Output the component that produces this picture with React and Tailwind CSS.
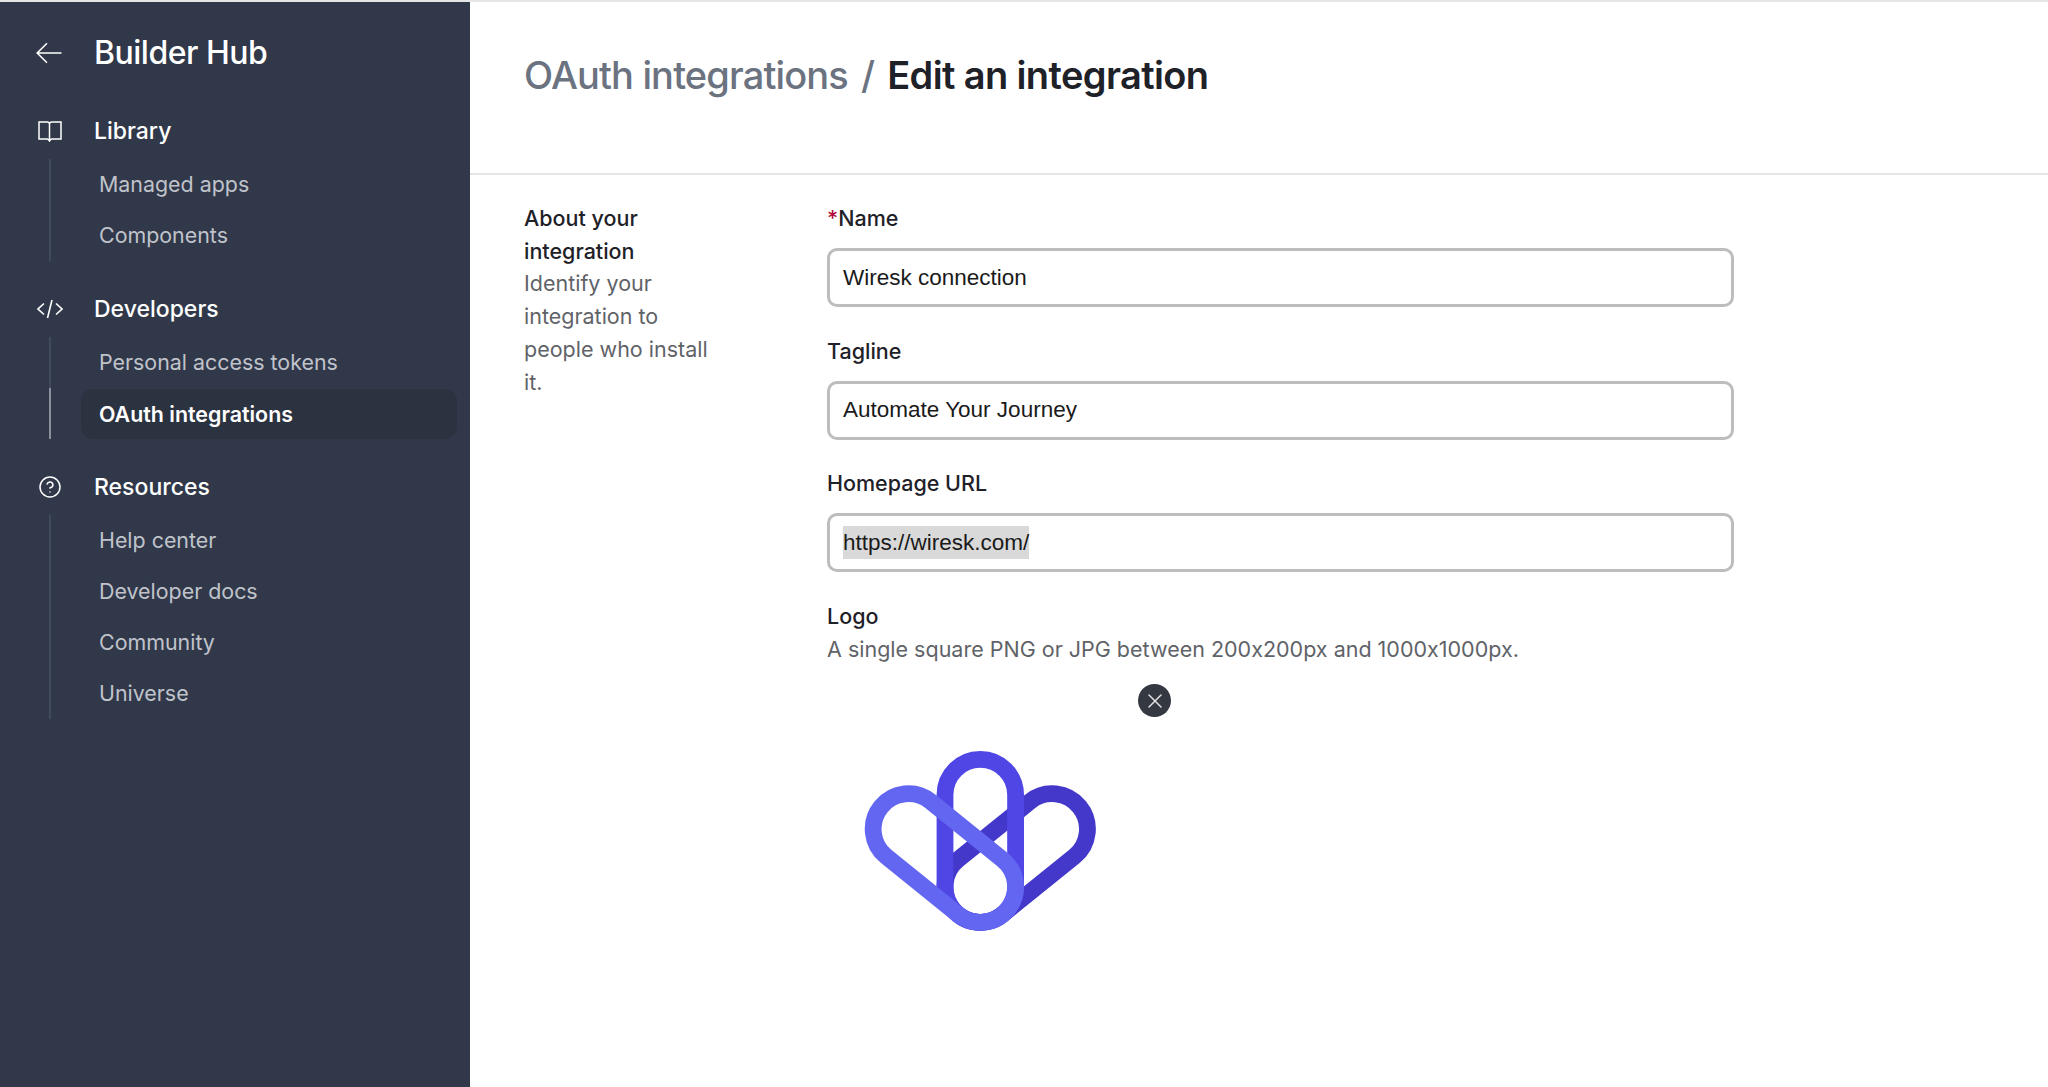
import React from 'react'
import { CircleHelp, X } from 'lucide-react'

function BackIcon() {
  return (
    <svg width="26" height="22" viewBox="0 0 26 22" fill="none" stroke="currentColor" strokeWidth="1.6">
      <path d="M25.5 11H1.2M11 1.2L1.2 11l9.8 9.8" />
    </svg>
  )
}

function BookIcon() {
  return (
    <svg width="24" height="21" viewBox="0 0 24 21" fill="none" stroke="currentColor" strokeWidth="1.5">
      <path d="M1 1H9Q11.5 1 11.5 3Q11.5 1 14 1H23V18H14Q12.5 18 11.5 20Q10.5 18 9 18H1ZM11.5 3V19.5" />
    </svg>
  )
}

function CodeIcon() {
  return (
    <svg width="26" height="20" viewBox="0 0 26 20" fill="none" stroke="currentColor" strokeWidth="1.6">
      <path d="M7 4.5L1 10l6 5.5M19 4.5l6 5.5-6 5.5M15 1l-4.5 18" />
    </svg>
  )
}

function HelpIcon() {
  return <CircleHelp size={24} strokeWidth={1.5} />
}

const groups = [
  { title: 'Library', icon: BookIcon, items: ['Managed apps', 'Components'] },
  {
    title: 'Developers',
    icon: CodeIcon,
    items: ['Personal access tokens', 'OAuth integrations'],
  },
  {
    title: 'Resources',
    icon: HelpIcon,
    items: ['Help center', 'Developer docs', 'Community', 'Universe'],
  },
]

function Sidebar() {
  return (
    <aside className="w-[470px] shrink-0 bg-[#30384a] pt-[26px] font-['Inter',sans-serif] text-white">
      <div className="flex h-[50px] items-center">
        <div className="flex w-[94px] justify-center pl-[10px] pr-[6px]">
          <BackIcon />
        </div>
        <span className="text-[32px] font-medium tracking-[-0.5px]">Builder Hub</span>
      </div>
      <div className="mt-[25px] flex flex-col gap-[20px]">
        {groups.map((group) => (
          <div key={group.title}>
            <div className="flex h-[56px] items-center">
              <div className="flex w-[100px] justify-center">
                <group.icon />
              </div>
              <span className="-ml-[6px] pt-[1px] text-[23px] font-medium">{group.title}</span>
            </div>
            <ul className="ml-[49px] mr-[13px]">
              {group.items.map((item) => {
                const active = item === 'OAuth integrations'
                return (
                  <li
                    key={item}
                    className={`flex h-[51px] items-center border-l-2 pl-[30px] ${active ? 'border-[#8b909c]' : 'border-[#414a5c]'}`}
                  >
                    <div
                      className={`flex h-[50px] w-full items-center rounded-[12px] pl-[18px] text-[21.4px] ${active ? 'bg-[#2b3240] pt-[1px] font-semibold text-white' : 'text-[#c0c3ca]'}`}
                    >
                      {item}
                    </div>
                  </li>
                )
              })}
            </ul>
          </div>
        ))}
      </div>
    </aside>
  )
}

function Field({ label, value, required, selected }) {
  return (
    <div>
      <label className="block text-[21.5px] font-medium leading-[33px] text-[#1f2128]">
        {required && <span className="text-[#b00a3c]">*</span>}
        {label}
      </label>
      <div className="mt-[13px] flex h-[59px] items-center rounded-[10px] border-[3px] border-[#bdbdbd] px-[13px] font-['Liberation_Sans',sans-serif] text-[22.5px] text-[#1a1a1a]">
        {selected ? <span className="bg-[#d9d9d9]">{value}</span> : value}
      </div>
    </div>
  )
}

function Logo() {
  const pill = {
    x: 145,
    y: 99.4,
    width: 70.6,
    height: 162.9,
    rx: 35.3,
    fill: 'none',
    strokeWidth: 16.8,
  }
  return (
    <svg viewBox="27 40 306 306" className="h-[306px] w-[306px]">
      <rect {...pill} stroke="#4338ca" transform="rotate(51.1 180.3 227)" />
      <rect {...pill} stroke="#4f46e5" />
      <rect {...pill} stroke="#6366f1" transform="rotate(-51.1 180.3 227)" />
    </svg>
  )
}

export default function App() {
  return (
    <div className="flex min-h-[1087px] border-t-2 border-[#e5e5e5] bg-white font-['Inter',sans-serif] [font-feature-settings:'calt'_0]">
      <Sidebar />
      <main className="flex-1">
        <header className="flex h-[173px] items-start border-b-2 border-[#e5e5e5] pl-[54px] pt-[49px]">
          <h1 className="text-[38px] font-medium leading-[48px] tracking-[-0.85px] text-[#6b7280]">
            OAuth integrations<span className="mx-[13px]">/</span>
            <span className="font-semibold tracking-[-0.62px] text-[#1f2128]">Edit an integration</span>
          </h1>
        </header>
        <div className="flex pl-[54px] pt-[27px]">
          <div className="w-[303px] pr-[110px] text-[21.5px] leading-[32.7px] text-[#5f6368]">
            <div className="font-medium text-[#1f2128]">About your integration</div>
            Identify your integration to people who install it.
          </div>
          <div className="w-[907px]">
            <div className="flex flex-col gap-[27.5px]">
              <Field label="Name" value="Wiresk connection" required />
              <Field label="Tagline" value="Automate Your Journey" />
              <Field label="Homepage URL" value="https://wiresk.com/" selected />
            </div>
            <div className="mt-[28px] text-[21.5px] leading-[33px]">
              <div className="font-medium text-[#1f2128]">Logo</div>
              <div className="text-[#5f6368]">A single square PNG or JPG between 200x200px and 1000x1000px.</div>
            </div>
            <div className="relative mt-[34px] w-[306px]">
              <Logo />
              <button className="absolute -top-[16px] left-[311px] flex h-[33px] w-[33px] items-center justify-center rounded-full bg-[#343841] text-[#e5e5e5]">
                <X size={24} strokeWidth={1.4} />
              </button>
            </div>
          </div>
        </div>
      </main>
    </div>
  )
}
